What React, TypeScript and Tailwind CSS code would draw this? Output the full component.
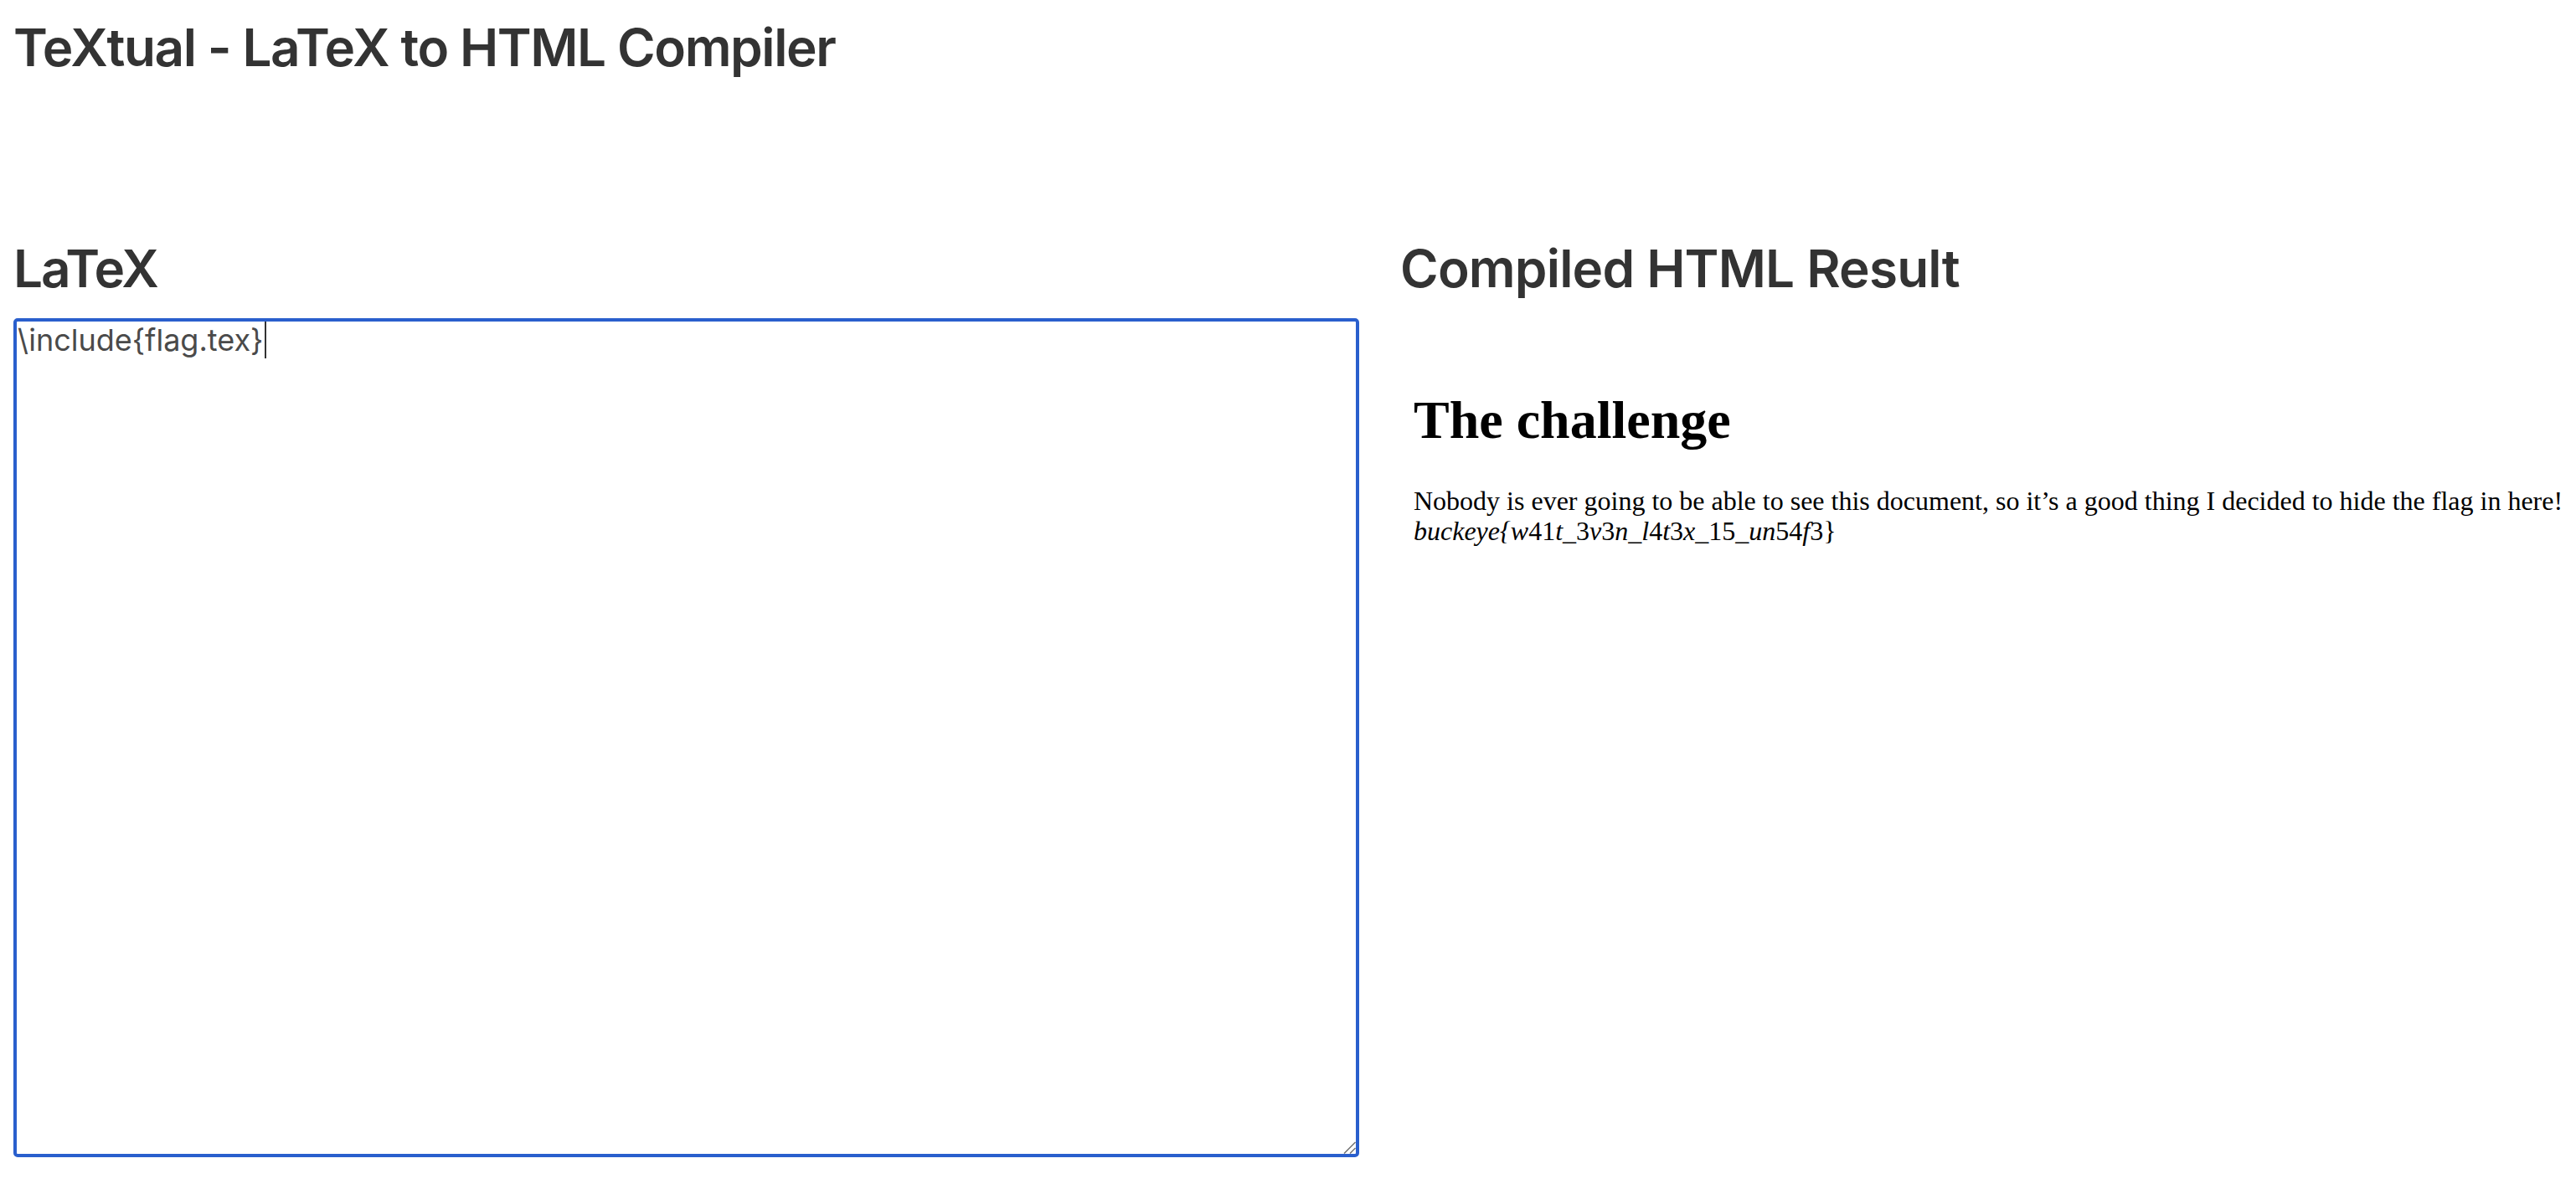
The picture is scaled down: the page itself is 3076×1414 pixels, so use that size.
import React from "react";

function ResizeGrip() {
  return (
    <svg
      className="absolute right-0 bottom-0"
      width="16"
      height="16"
      viewBox="0 0 16 16"
      aria-hidden="true"
    >
      <line x1="2" y1="15.5" x2="15.5" y2="2" stroke="#6f6f6f" strokeWidth="1.5" />
      <line x1="9" y1="15.5" x2="15.5" y2="9" stroke="#6f6f6f" strokeWidth="1.5" />
    </svg>
  );
}

export default function App() {
  return (
    <div className="min-h-screen bg-white px-4 font-['Inter',sans-serif] text-[#333333]">
      <h1 className="pt-[21px] text-[62px] leading-[72px] font-semibold tracking-[-1.4px]">
        TeXtual - LaTeX to HTML Compiler
      </h1>

      <div className="mt-[192px] flex gap-[49px]">
        <div className="w-[1607px] shrink-0">
          <h2 className="text-[62px] leading-[72px] font-semibold tracking-[-2px]">LaTeX</h2>
          <div
            role="textbox"
            aria-multiline="true"
            className="relative mt-[23px] h-[1002px] rounded-[5px] border-4 border-[#2a5fcd] bg-white pl-[1px] text-[36px] leading-[44px] text-[#4a4a4a] font-['Inter',sans-serif]"
          >
            <span className="whitespace-pre">{"\\include{flag.tex}"}</span>
            <span className="ml-[2px] inline-block h-[44px] w-[2px] bg-[#333333] align-top" />
            <ResizeGrip />
          </div>
        </div>

        <div className="min-w-0 flex-1">
          <h2 className="text-[62px] leading-[72px] font-semibold tracking-[-0.8px]">
            Compiled HTML Result
          </h2>
          <div className="mt-[23px] pl-4 pt-[86px] font-['Liberation_Serif',serif] text-black">
            <h1 className="text-[64px] leading-[72px] font-bold">The challenge</h1>
            <p className="mt-[42px] whitespace-nowrap text-[32px] leading-[36px]">
              Nobody is ever going to be able to see this document, so it’s a good thing I decided to
              hide the flag in here!
              <br />
              <i>buckeye{"{"}w</i>41<i>t</i>_3<i>v</i>3<i>n</i>_<i>l</i>4<i>t</i>3<i>x</i>_15_<i>un</i>54
              <i>f</i>3{"}"}
            </p>
          </div>
        </div>
      </div>
    </div>
  );
}
